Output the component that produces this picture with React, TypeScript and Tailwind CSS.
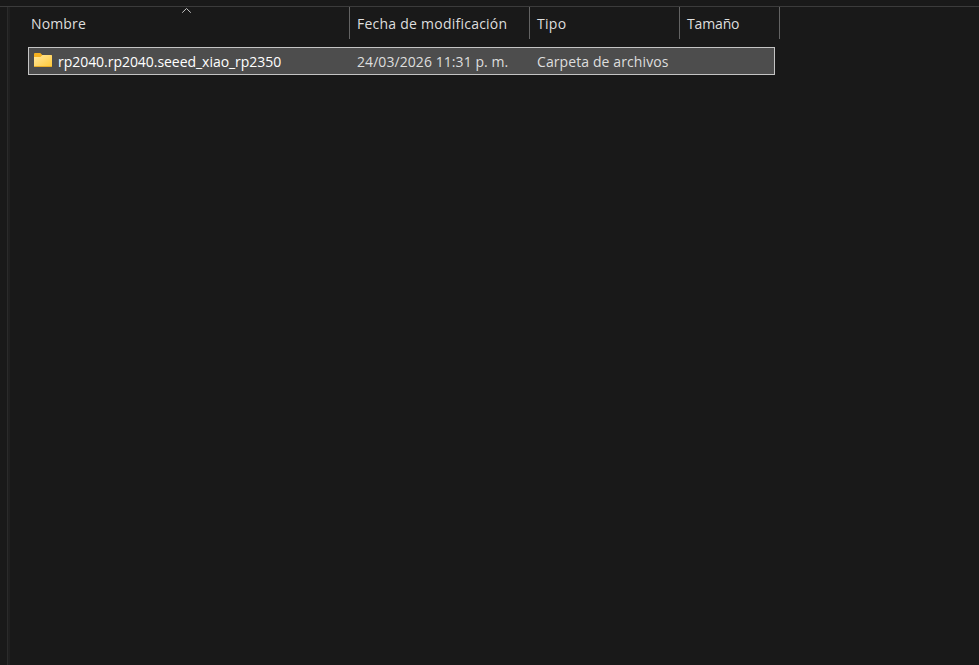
import { clsx } from "clsx";

const columns = [
  { label: "Nombre", width: "w-[322px] pl-[3px]", text: "tracking-[0.15px]", sorted: true },
  { label: "Fecha de modificación", width: "w-[180px] pl-[7px]", text: "tracking-[0.24px]" },
  { label: "Tipo", width: "w-[150px] pl-[7px]", text: "tracking-[0.3px]" },
  { label: "Tamaño", width: "w-[100px] pl-[7px]", text: "tracking-[-0.15px]" },
];

const files = [
  {
    name: "rp2040.rp2040.seeed_xiao_rp2350",
    modified: "24/03/2026 11:31 p. m.",
    type: "Carpeta de archivos",
  },
];

function FolderIcon() {
  return (
    <svg width="18" height="14" viewBox="0 0 18 14" className="mb-px shrink-0" aria-hidden>
      <defs>
        <linearGradient id="folder" x1="0" y1="0" x2="1" y2="1">
          <stop offset="0" stopColor="#ffe7a0" />
          <stop offset="1" stopColor="#ffc937" />
        </linearGradient>
      </defs>
      <path d="M0 1Q0 0 1 0H6.3L8.3 2H17Q18 2 18 3V7H0Z" fill="#f5b01f" />
      <path d="M0 4H6.5L8.5 2H17Q18 2 18 3V13Q18 14 17 14H1Q0 14 0 13Z" fill="url(#folder)" />
      <path d="M0 13Q0 14 1 14H17Q18 14 18 13Z" fill="#e9ad29" />
    </svg>
  );
}

export default function App() {
  return (
    <div className="flex h-screen w-screen flex-col overflow-hidden bg-[#191919] pt-[6px] font-['Open_Sans','Noto_Sans',sans-serif] text-[14px] leading-5 text-[#dedede]">
      <div className="flex min-h-0 flex-1 border-t border-[#3b3b3b]">
        <div className="w-[10px] shrink-0 border-r-2 border-[#1f1f1f] pl-[7px]">
          <div className="h-full w-px bg-[#2b2b2b]" />
        </div>
        <main className="flex-1 pl-[18px]">
          <div className="flex h-8">
            {columns.map((c) => (
              <div key={c.label} className={clsx("relative shrink-0 border-r border-[#636363] pt-[7px]", c.width)}>
                <span className={clsx("whitespace-nowrap", c.text)}>{c.label}</span>
                {c.sorted && (
                  <svg className="absolute top-0 left-[153px]" width="11" height="7" viewBox="0 0 11 7" fill="none" aria-hidden>
                    <path d="M1.2 5.7L5.5 1.5L9.8 5.7" stroke="#c5c5c5" />
                  </svg>
                )}
              </div>
            ))}
          </div>
          {files.map((f) => (
            <div key={f.name} className="mt-2 flex h-7 w-[747px] items-start border border-[#c4c4c4] bg-[#4d4d4d] pt-1 whitespace-nowrap">
              <div className="flex w-[328px] shrink-0 items-start pl-[5px] text-white">
                <span className="pt-px">
                  <FolderIcon />
                </span>
                <span className="ml-[6px] tracking-[-0.04px]">{f.name}</span>
              </div>
              <div className="w-[180px] shrink-0 tracking-[0.07px]">{f.modified}</div>
              <div className="tracking-[0.1px]">{f.type}</div>
            </div>
          ))}
        </main>
      </div>
    </div>
  );
}
